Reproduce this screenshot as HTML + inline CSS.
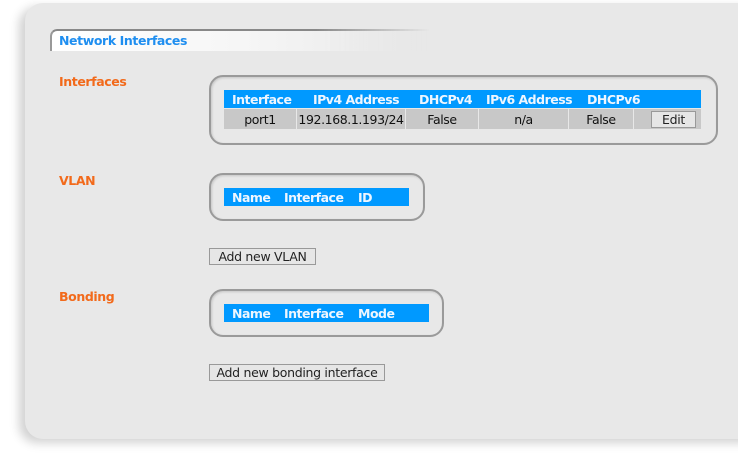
<!DOCTYPE html>
<html><head><style>
*{margin:0;padding:0;box-sizing:border-box}
body{width:738px;height:457px;background:#fff;position:relative;overflow:hidden;font-family:"DejaVu Sans","Liberation Sans",sans-serif}
.panel{position:absolute;left:25px;top:3px;width:740px;height:436px;background:#e8e8e8;border-radius:18px;box-shadow:-6px 4px 10px rgba(0,0,0,.18)}
.tab{position:absolute;left:50px;top:29px;width:380px;height:22px;border-top:2px solid #888;border-left:2px solid #999;border-radius:7px 0 0 0;background:linear-gradient(90deg,#fff 0%,#f6f6f6 50%,#e8e8e8 100%);
-webkit-mask:linear-gradient(90deg,#000 70%,transparent)}
.tabt{position:absolute;left:59px;top:33px;font:bold 12.5px "DejaVu Sans",sans-serif;color:#1e8ef0;letter-spacing:-.4px}
.lbl{position:absolute;left:59px;font:bold 12.5px "DejaVu Sans",sans-serif;color:#f26a1b;letter-spacing:-.4px}
.box{position:absolute;border:2px solid #9a9a9a;border-radius:14px;box-shadow:inset 1px 1px 2px rgba(0,0,0,.15)}
.hdr{position:absolute;background:#0099ff;height:18px;color:#eef6ff;font:bold 12.5px "DejaVu Sans",sans-serif;letter-spacing:-.5px;white-space:nowrap}
.hdr span{position:absolute;top:2px}
.cell{position:absolute;top:109px;height:20px;background:#c8c8c8;font:12.5px "DejaVu Sans",sans-serif;color:#111;text-align:center;line-height:21px;letter-spacing:-.4px}
.btn{position:absolute;height:17px;background:#e6e6e6;border:1px solid #999;font:12.5px "DejaVu Sans",sans-serif;color:#222;text-align:center;line-height:16px;letter-spacing:-.3px}
</style></head><body>
<div class="panel"></div>
<div class="tab"></div>
<div class="tabt">Network Interfaces</div>
<div class="lbl" style="top:74px">Interfaces</div>
<div class="lbl" style="top:173px">VLAN</div>
<div class="lbl" style="top:289px">Bonding</div>

<div class="box" style="left:209px;top:75px;width:509px;height:70px"></div>
<div class="hdr" style="left:224px;top:90px;width:477px">
<span style="left:8px">Interface</span><span style="left:89px">IPv4 Address</span><span style="left:195px">DHCPv4</span><span style="left:262px">IPv6 Address</span><span style="left:363px">DHCPv6</span></div>
<div class="cell" style="left:224px;width:72px">port1</div>
<div class="cell" style="left:297px;width:108px">192.168.1.193/24</div>
<div class="cell" style="left:406px;width:72px">False</div>
<div class="cell" style="left:479px;width:89px">n/a</div>
<div class="cell" style="left:569px;width:64px">False</div>
<div class="cell" style="left:634px;width:67px"></div>
<div class="btn" style="left:651px;top:111px;width:45px">Edit</div>

<div class="box" style="left:209px;top:173px;width:216px;height:48px"></div>
<div class="hdr" style="left:224px;top:188px;width:185px"><span style="left:8px">Name</span><span style="left:60px">Interface</span><span style="left:134px">ID</span></div>
<div class="btn" style="left:209px;top:248px;width:107px">Add new VLAN</div>

<div class="box" style="left:209px;top:289px;width:235px;height:48px"></div>
<div class="hdr" style="left:224px;top:304px;width:205px"><span style="left:8px">Name</span><span style="left:60px">Interface</span><span style="left:134px">Mode</span></div>
<div class="btn" style="left:209px;top:364px;width:176px">Add new bonding interface</div>
</body></html>
